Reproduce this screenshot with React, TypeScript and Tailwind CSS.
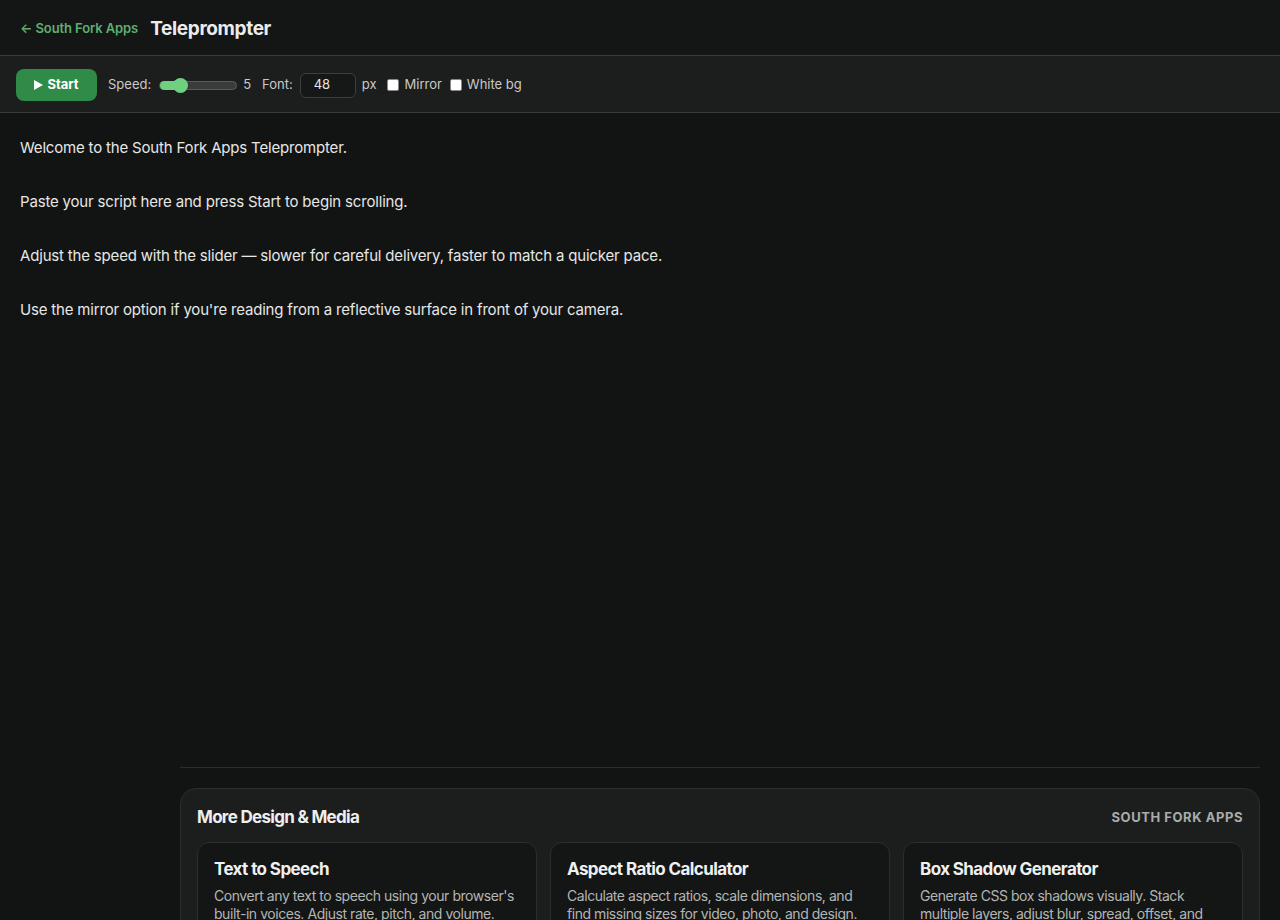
import React from "react";

const cards = [
  {
    title: "Text to Speech",
    desc: "Convert any text to speech using your browser's built-in voices. Adjust rate, pitch, and volume.",
  },
  {
    title: "Aspect Ratio Calculator",
    desc: "Calculate aspect ratios, scale dimensions, and find missing sizes for video, photo, and design.",
  },
  {
    title: "Box Shadow Generator",
    desc: "Generate CSS box shadows visually. Stack multiple layers, adjust blur, spread, offset, and color.",
  },
];

export default function App() {
  return (
    <div
      className="min-h-[920px] bg-[#121413] text-[#e8e9e8]"
      style={{ fontFamily: "Inter, 'Noto Sans', sans-serif" }}
    >
      <header className="h-[56px] flex items-center gap-3 px-5 pt-[3px] bg-[#141515] border-b border-[#3a3b3b]">
        <a className="text-[13px] font-semibold text-[#5fae6e] tracking-[-0.1px]">← South Fork Apps</a>
        <h1 className="text-[19px] font-bold text-[#ececec] tracking-[-0.35px]">Teleprompter</h1>
      </header>

      <div className="h-[57px] flex items-center px-4 pt-[2px] bg-[#1c1d1d] border-b border-[#3a3b3b] text-[13px] text-[#c9cac9]">
        <button className="h-[32px] w-[81px] flex items-center justify-center gap-1 rounded-lg bg-[#2f8b47] text-white font-bold text-[13px]">
          <svg width="9" height="10" viewBox="0 0 9 10"><path d="M0 0 L9 5 L0 10 Z" fill="white" /></svg>
          Start
        </button>
        <span className="ml-[11px]">Speed:</span>
        <div className="ml-[8px] relative w-[78px] h-[9px] rounded-full bg-[#3a3b3b] border border-[#5a5b5b]">
          <div className="absolute left-0 top-[-1px] h-[9px] w-[24px] rounded-full bg-[#6fd07f]" />
          <div className="absolute left-[13px] top-[-4px] h-[15px] w-[15px] rounded-full bg-[#6fd07f]" />
        </div>
        <span className="ml-[6px]">5</span>
        <span className="ml-[11px]">Font:</span>
        <div className="ml-[7px] w-[56px] h-[25px] rounded-md bg-[#161717] border border-[#3c3d3d] flex items-center px-[13px] text-[#e5e5e5]">48</div>
        <span className="ml-[6px]">px</span>
        <span className="ml-[11px] w-[12px] h-[12px] bg-white rounded-[2px] border border-[#888]" />
        <span className="ml-[5px]">Mirror</span>
        <span className="ml-[8px] w-[12px] h-[12px] bg-white rounded-[2px] border border-[#888]" />
        <span className="ml-[5px]">White bg</span>
      </div>

      <div className="h-[654px] px-5 pt-[21px] text-[15px] leading-[27px] text-[#e6e7e6] tracking-[-0.18px]">
        <p>Welcome to the South Fork Apps Teleprompter.</p>
        <p className="mt-[27px]">Paste your script here and press Start to begin scrolling.</p>
        <p className="mt-[27px]">Adjust the speed with the slider — slower for careful delivery, faster to match a quicker pace.</p>
        <p className="mt-[27px]">Use the mirror option if you're reading from a reflective surface in front of your camera.</p>
      </div>

      <div className="ml-[180px] mr-5 border-t border-[#1f3329] pt-5">
        <section className="rounded-2xl bg-[#1c1e1d] border border-[#2c2e2d] px-4 pt-[18px] pb-6">
          <div className="flex items-center justify-between h-[22px]">
            <h2 className="text-[17px] font-bold text-[#eeeeee] tracking-[-0.7px]">More Design &amp; Media</h2>
            <span className="text-[13px] font-bold tracking-[0.55px] text-[#a9acab]">SOUTH FORK APPS</span>
          </div>
          <div className="mt-[13px] grid grid-cols-3 gap-[13px]">
            {cards.map((c) => (
              <div key={c.title} className="rounded-xl bg-[#131615] border border-[#2c2e2d] px-4 pt-[14px] pb-4">
                <div className="text-[17px] font-bold text-[#f0f0f0] tracking-[-0.6px]">{c.title}</div>
                <p className="mt-[4px] text-[14px] leading-[18px] text-[#b3b5b4] tracking-[-0.45px]">{c.desc}</p>
              </div>
            ))}
          </div>
        </section>
      </div>
    </div>
  );
}
